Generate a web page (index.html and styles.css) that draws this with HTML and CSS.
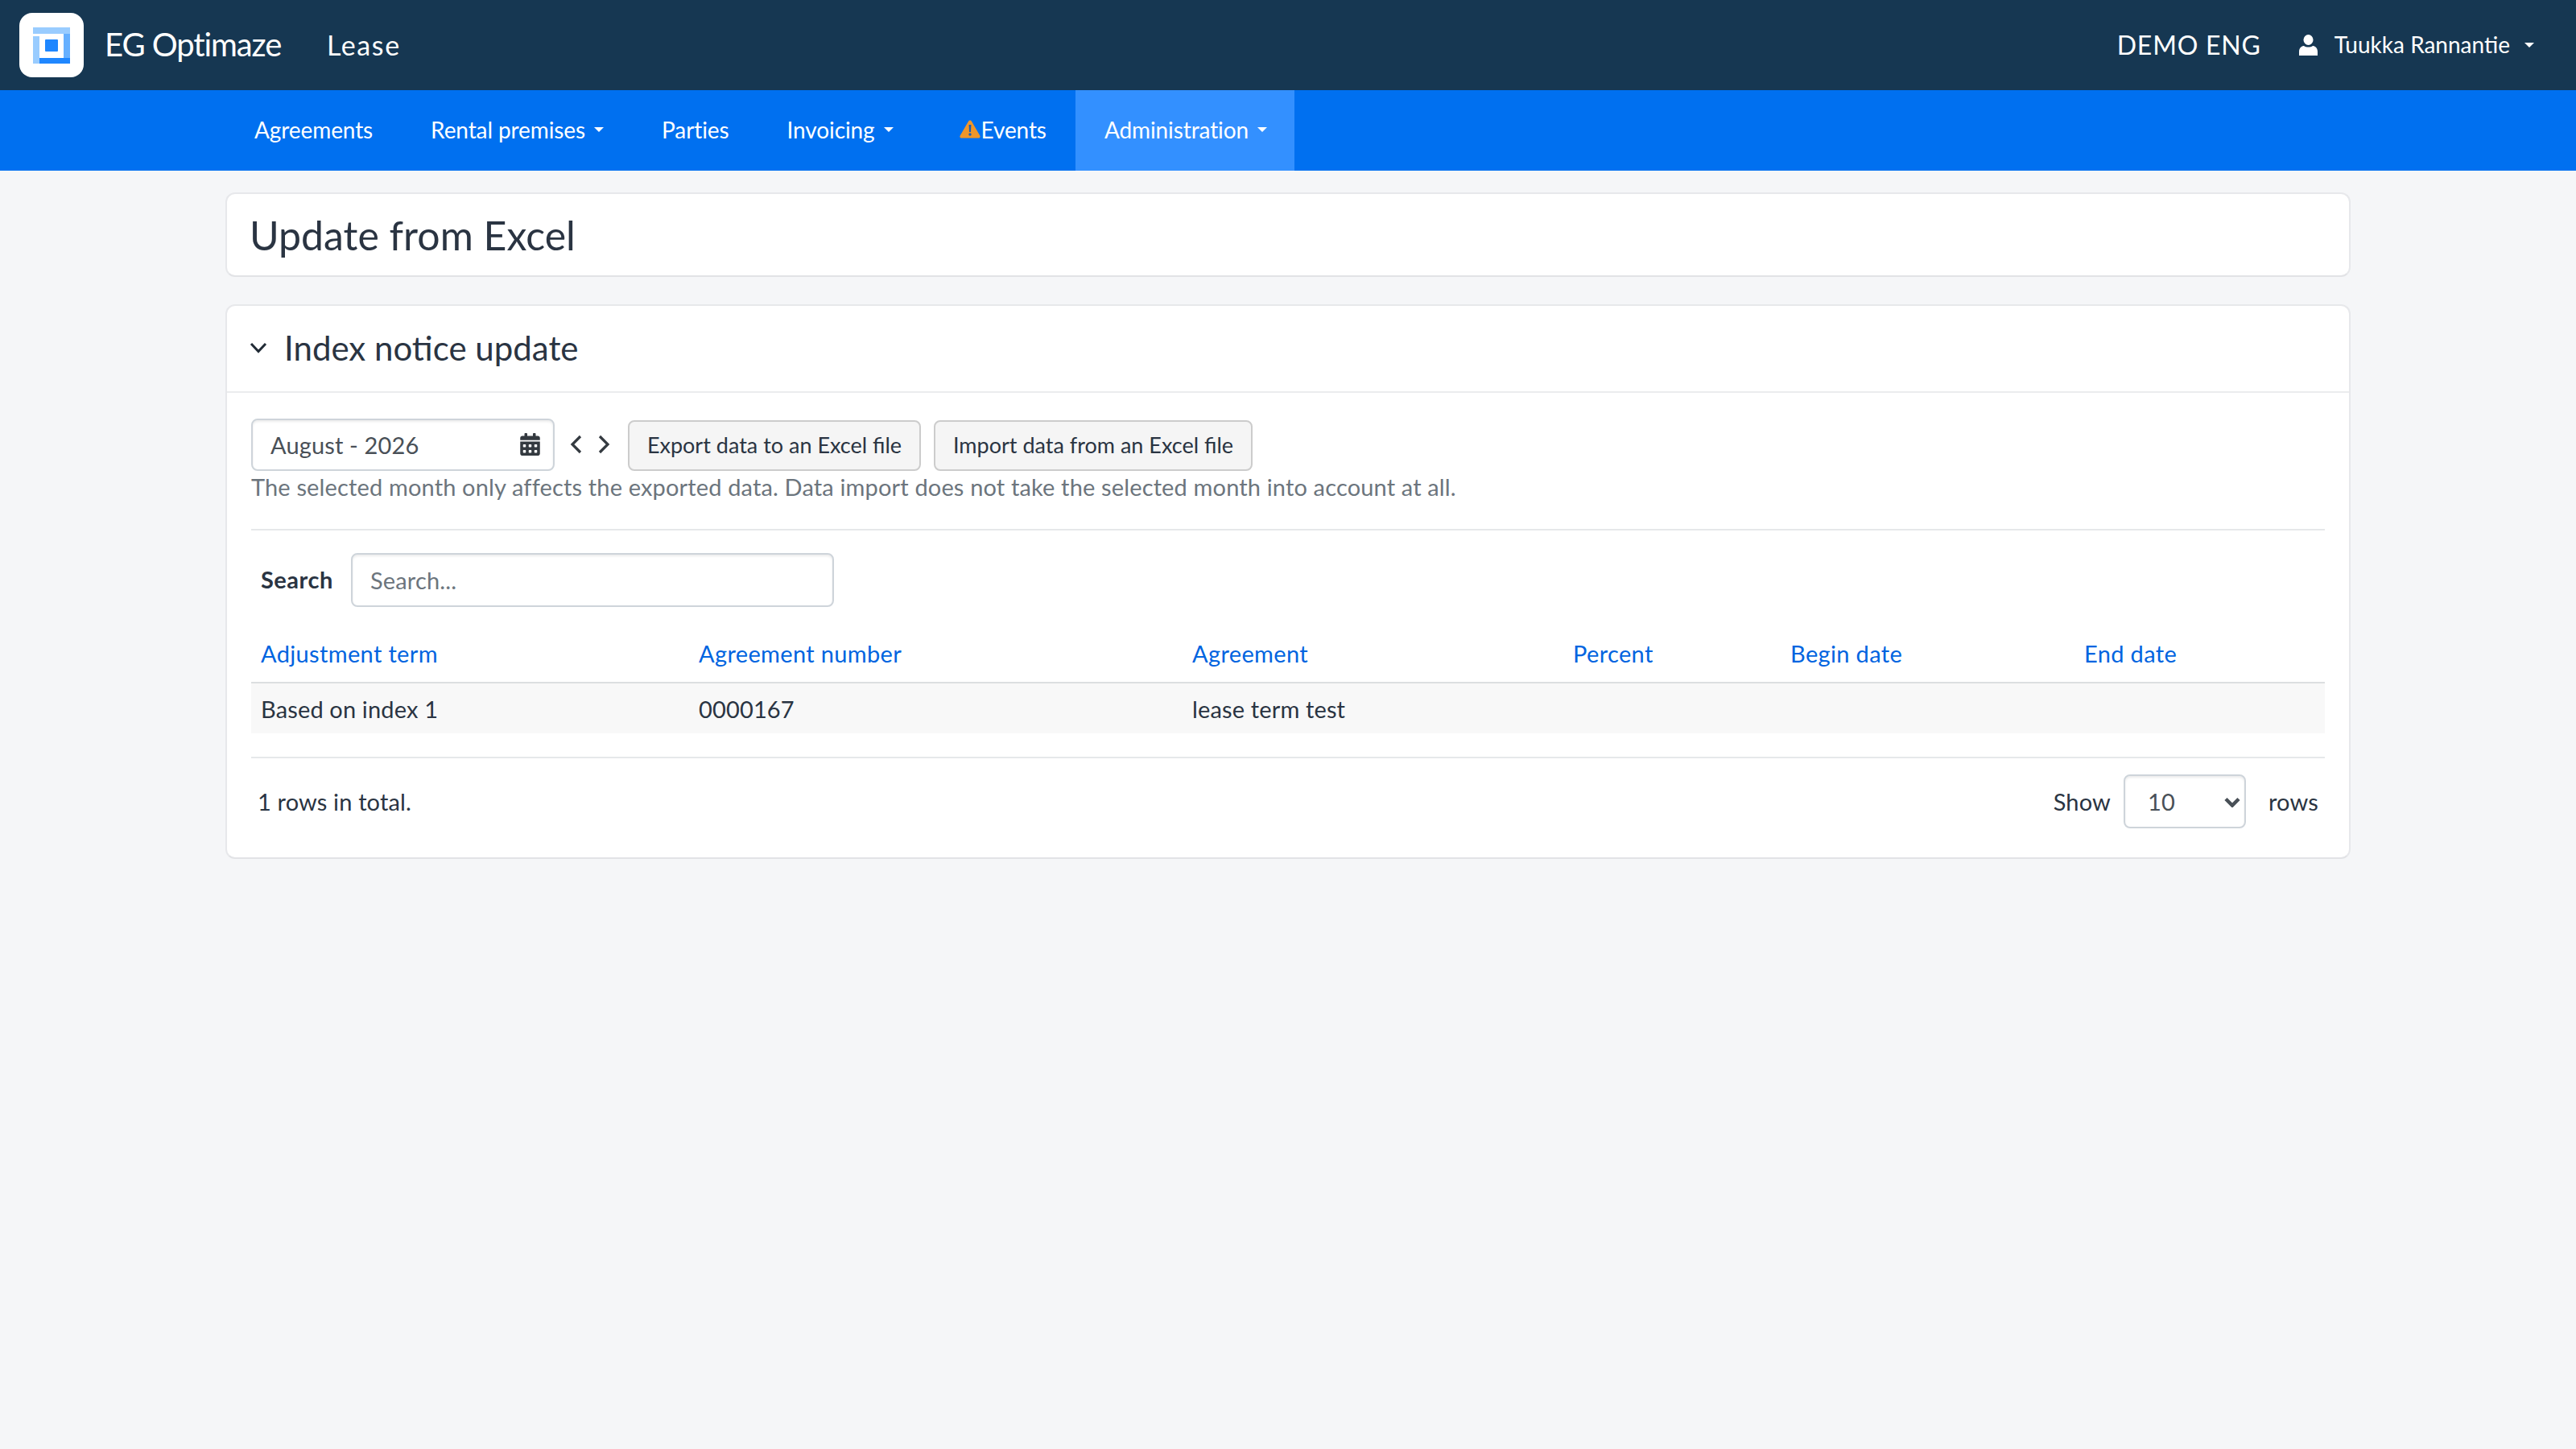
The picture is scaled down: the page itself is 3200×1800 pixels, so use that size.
FILE: index.html
```html
<!DOCTYPE html>
<html lang="en">
<head>
<meta charset="utf-8">
<title>Update from Excel</title>
<link rel="stylesheet" href="styles.css">
</head>
<body>
<header class="topbar">
  <div class="logo-box">
    <svg class="logo" viewBox="0 0 46 45" width="46" height="45">
      <rect x="0" y="0" width="46" height="8" fill="#99ccff"/>
      <rect x="38" y="8" width="8" height="30" fill="#66b0ff"/>
      <rect x="8" y="38" width="38" height="7" fill="#1f87ff"/>
      <rect x="0" y="11" width="8" height="34" fill="#99ccff"/>
      <rect x="15" y="15" width="16" height="15" rx="1" fill="#1f87ff"/>
    </svg>
  </div>
  <span class="brand">EG Optimaze</span>
  <span class="module">Lease</span>
  <span class="spacer"></span>
  <span class="tenant">DEMO ENG</span>
  <svg class="user-icon" viewBox="0 0 23 26" width="23" height="26">
    <ellipse cx="11.5" cy="6.5" rx="6" ry="6.5" fill="#fff"/>
    <path d="M0 26v-5c0-4.500 3.500-7 6-7 1.500 1 3.500 1.500 5.500 1.500s4-.5 5.500-1.500c2.500 0 6 2.500 6 7v5z" fill="#fff"/>
  </svg>
  <span class="user-name">Tuukka Rannantie</span>
  <span class="caret user-caret"></span>
</header>
<nav class="mainnav">
  <a class="nav-item">Agreements</a>
  <a class="nav-item">Rental premises<span class="caret"></span></a>
  <a class="nav-item">Parties</a>
  <a class="nav-item">Invoicing<span class="caret"></span></a>
  <a class="nav-item events">
    <svg class="warn" viewBox="0 0 26 24" width="26" height="24">
      <path d="M13 1.500c-.8 0-1.500.5-2 1.300L.7 20.500C-.2 22 .8 23.500 2.500 23.500h21c1.700 0 2.700-1.500 1.800-3L15 2.800c-.5-.8-1.200-1.300-2-1.300z" fill="#f0962a"/>
      <path d="M11.600 7h2.800l-.4 9h-2z" fill="#1a5fb8"/>
      <circle cx="13" cy="19" r="1.700" fill="#1a5fb8"/>
    </svg>Events</a>
  <a class="nav-item active">Administration<span class="caret"></span></a>
</nav>
<main class="page">
  <section class="card title-card"><h1 class="page-title">Update from Excel</h1></section>
  <section class="card">
    <div class="card-head">
      <svg class="head-chevron" viewBox="0 0 22 14" width="22" height="14"><path d="M2 2l9 9.500L20 2" fill="none" stroke="#212b36" stroke-width="3"/></svg>
      <h2 class="card-title">Index notice update</h2>
    </div>
    <div class="card-body">
      <div class="toolbar">
        <div class="date-input">
          <span>August - 2026</span>
          <svg class="cal" viewBox="0 0 448 512" width="25" height="28"><path fill="#343a40" d="M0 464c0 26.500 21.500 48 48 48h352c26.500 0 48-21.500 48-48V192H0v272zm320-196c0-6.600 5.400-12 12-12h40c6.600 0 12 5.400 12 12v40c0 6.600-5.400 12-12 12h-40c-6.600 0-12-5.400-12-12v-40zm0 128c0-6.600 5.400-12 12-12h40c6.600 0 12 5.400 12 12v40c0 6.600-5.400 12-12 12h-40c-6.600 0-12-5.400-12-12v-40zM192 268c0-6.600 5.400-12 12-12h40c6.600 0 12 5.400 12 12v40c0 6.600-5.400 12-12 12h-40c-6.600 0-12-5.400-12-12v-40zm0 128c0-6.600 5.400-12 12-12h40c6.600 0 12 5.400 12 12v40c0 6.600-5.400 12-12 12h-40c-6.600 0-12-5.400-12-12v-40zM64 268c0-6.600 5.400-12 12-12h40c6.600 0 12 5.400 12 12v40c0 6.600-5.400 12-12 12H76c-6.600 0-12-5.400-12-12v-40zm0 128c0-6.600 5.400-12 12-12h40c6.600 0 12 5.400 12 12v40c0 6.600-5.400 12-12 12H76c-6.600 0-12-5.400-12-12v-40zM400 64h-48V16c0-8.800-7.200-16-16-16h-32c-8.800 0-16 7.200-16 16v48H160V16c0-8.800-7.200-16-16-16h-32c-8.800 0-16 7.200-16 16v48H48C21.500 64 0 85.500 0 112v48h448v-48c0-26.500-21.500-48-48-48z"/></svg>
        </div>
        <svg class="arrow arrow-prev" viewBox="0 0 15 24" width="15" height="24"><path d="M13 2L3 12l10 10" fill="none" stroke="#343a40" stroke-width="3.200"/></svg>
        <svg class="arrow arrow-next" viewBox="0 0 15 24" width="15" height="24"><path d="M2 2l10 10L2 22" fill="none" stroke="#343a40" stroke-width="3.200"/></svg>
        <button class="btn btn-export">Export data to an Excel file</button>
        <button class="btn btn-import">Import data from an Excel file</button>
      </div>
      <p class="help">The selected month only affects the exported data. Data import does not take the selected month into account at all.</p>
      <hr class="rule rule-top">
      <div class="search-row">
        <label class="search-label">Search</label>
        <input class="search-input" placeholder="Search...">
      </div>
      <table class="grid">
        <thead>
          <tr>
            <th class="c1">Adjustment term</th>
            <th class="c2">Agreement number</th>
            <th class="c3">Agreement</th>
            <th class="c4">Percent</th>
            <th class="c5">Begin date</th>
            <th class="c6">End date</th>
          </tr>
        </thead>
        <tbody>
          <tr>
            <td>Based on index 1</td>
            <td>0000167</td>
            <td>lease term test</td>
            <td></td>
            <td></td>
            <td></td>
          </tr>
        </tbody>
      </table>
      <hr class="rule rule-bottom">
      <div class="pager">
        <span class="total">1 rows in total.</span>
        <span class="spacer"></span>
        <span>Show</span>
        <span class="select-wrap">
          <select class="size"><option>10</option></select>
          <svg class="select-arrow" viewBox="0 0 20 13" width="20" height="13"><path d="M2 2.500l8 8 8-8" fill="none" stroke="#495057" stroke-width="4.500"/></svg>
        </span>
        <span class="rows-label">rows</span>
      </div>
    </div>
  </section>
</main>
</body>
</html>
```

FILE: styles.css
```css
* { box-sizing: border-box; }
html, body { margin: 0; padding: 0; }
body {
  background: #f5f6f8;
  color: #2a3442;
  font-family: "Lato", "Liberation Sans", sans-serif;
  font-size: 29px;
  letter-spacing: .15px;
  min-height: 1800px;
}
.spacer { flex: 1; }

.topbar {
  height: 112px;
  background: #163752;
  color: #fff;
  display: flex;
  align-items: center;
  padding: 0 52px 0 24px;
}
.logo-box {
  width: 80px;
  height: 80px;
  background: #fff;
  border-radius: 16px;
  display: flex;
  align-items: center;
  justify-content: center;
  margin-right: 26px;
}
.logo { display: block; }
.brand { font-size: 40px; letter-spacing: -1.100px; width: 276px; padding-bottom: 2px; }
.module { font-size: 34px; letter-spacing: 1.600px; padding-bottom: 2px; }
.tenant { font-size: 32px; letter-spacing: .8px; margin-right: 47px; padding-bottom: 2px; }
.user-icon { margin-right: 21px; }
.user-name { font-size: 28px; letter-spacing: 0; padding-bottom: 2px; }
.caret {
  display: inline-block;
  width: 0;
  height: 0;
  border-left: 6px solid transparent;
  border-right: 6px solid transparent;
  border-top: 6px solid #fff;
  margin-left: 11px;
  vertical-align: middle;
}
.user-caret { margin-left: 18px; }

.mainnav {
  height: 100px;
  background: #0070f0;
  display: flex;
  padding-left: 280px;
  font-size: 28px;
  letter-spacing: -.1px;
}
.nav-item {
  display: flex;
  align-items: center;
  color: #fff;
  padding: 0 36px 2px;
}
.events { padding-left: 46px; }
.warn { margin-right: 1px; margin-top: -2px; }
.active { background: #3390ff; padding-right: 34px; }

.page {
  width: 2640px;
  margin: 0 auto;
  padding-top: 27px;
}
.card {
  background: #fff;
  border: 2px solid #e7e8eb;
  border-bottom-color: #e2e3e6;
  border-radius: 12px;
}
.title-card {
  height: 105px;
  margin-bottom: 34px;
  display: flex;
  align-items: center;
  padding-left: 28px;
}
.page-title { margin: 0; font-size: 50px; font-weight: 400; letter-spacing: 0; }
.card-head {
  height: 108px;
  border-bottom: 2px solid #ebecee;
  display: flex;
  align-items: center;
  padding: 0 0 2px 28px;
}
.head-chevron { margin-right: 21px; }
.card-title { margin: 0; font-size: 42px; font-weight: 400; letter-spacing: 0; }
.card-body { padding: 32px 30px 36px; }

.toolbar {
  display: flex;
  align-items: flex-end;
  height: 65px;
}
.date-input {
  width: 377px;
  height: 65px;
  border: 2px solid #ced4da;
  border-radius: 8px;
  box-shadow: inset 0 2px 3px rgba(0,0,0,.08);
  display: flex;
  align-items: center;
  justify-content: space-between;
  padding: 0 16px 1px 22px;
  color: #495057;
}
.arrow { align-self: center; }
.arrow-prev { margin-left: 19px; margin-bottom: 2px; }
.arrow-next { margin-left: 20px; margin-bottom: 2px; }
.btn {
  height: 63px;
  font: inherit;
  font-size: 27px;
  letter-spacing: 0;
  white-space: nowrap;
  color: #2a3442;
  background: #f5f5f5;
  border: 2px solid #ccc;
  border-radius: 8px;
  padding: 0 0 2px;
}
.btn-export { width: 364px; margin-left: 22px; }
.btn-import { width: 396px; margin-left: 16px; }
.help {
  margin: 0;
  line-height: 40px;
  color: #6c757d;
}
.rule {
  border: 0;
  height: 2px;
  background: #e6e8ea;
  margin: 0;
}
.rule-top { margin-top: 32px; }
.search-row {
  display: flex;
  align-items: center;
  margin-top: 28px;
  padding-left: 12px;
}
.search-label { font-weight: 700; width: 112px; padding-bottom: 2px; letter-spacing: .5px; }
.search-input {
  width: 600px;
  height: 67px;
  border: 2px solid #ced4da;
  border-radius: 8px;
  box-shadow: inset 0 2px 3px rgba(0,0,0,.08);
  font: inherit;
  letter-spacing: inherit;
  padding: 0 22px;
  outline: none;
}
.search-input::placeholder { color: #6c757d; opacity: 1; }

.grid {
  width: 100%;
  table-layout: fixed;
  border-collapse: collapse;
  margin-top: 22px;
}
.grid th {
  height: 72px;
  text-align: left;
  font-weight: 400;
  letter-spacing: .35px;
  color: #0064e0;
  padding: 0 12px;
  border-bottom: 2px solid #dcdee0;
}
.grid td {
  height: 63px;
  padding: 0 12px;
  background: #f8f8f8;
}
.c1 { width: 544px; }
.c2 { width: 613px; }
.c3 { width: 473px; }
.c4 { width: 270px; }
.c5 { width: 365px; }
.rule-bottom { margin-top: 29px; }
.pager {
  display: flex;
  align-items: center;
  margin-top: 20px;
  padding: 0 8px;
}
.select-wrap {
  position: relative;
  display: block;
  width: 152px;
  height: 67px;
  margin-left: 16px;
}
.size {
  display: block;
  width: 100%;
  height: 100%;
  appearance: none;
  border: 2px solid #ced4da;
  border-radius: 8px;
  background: #fff;
  box-shadow: inset 0 2px 3px rgba(0,0,0,.08);
  font: inherit;
  letter-spacing: inherit;
  color: #495057;
  padding-left: 28px;
}
.select-arrow {
  position: absolute;
  right: 7px;
  top: 28px;
}
.rows-label { margin-left: 28px; }
```
